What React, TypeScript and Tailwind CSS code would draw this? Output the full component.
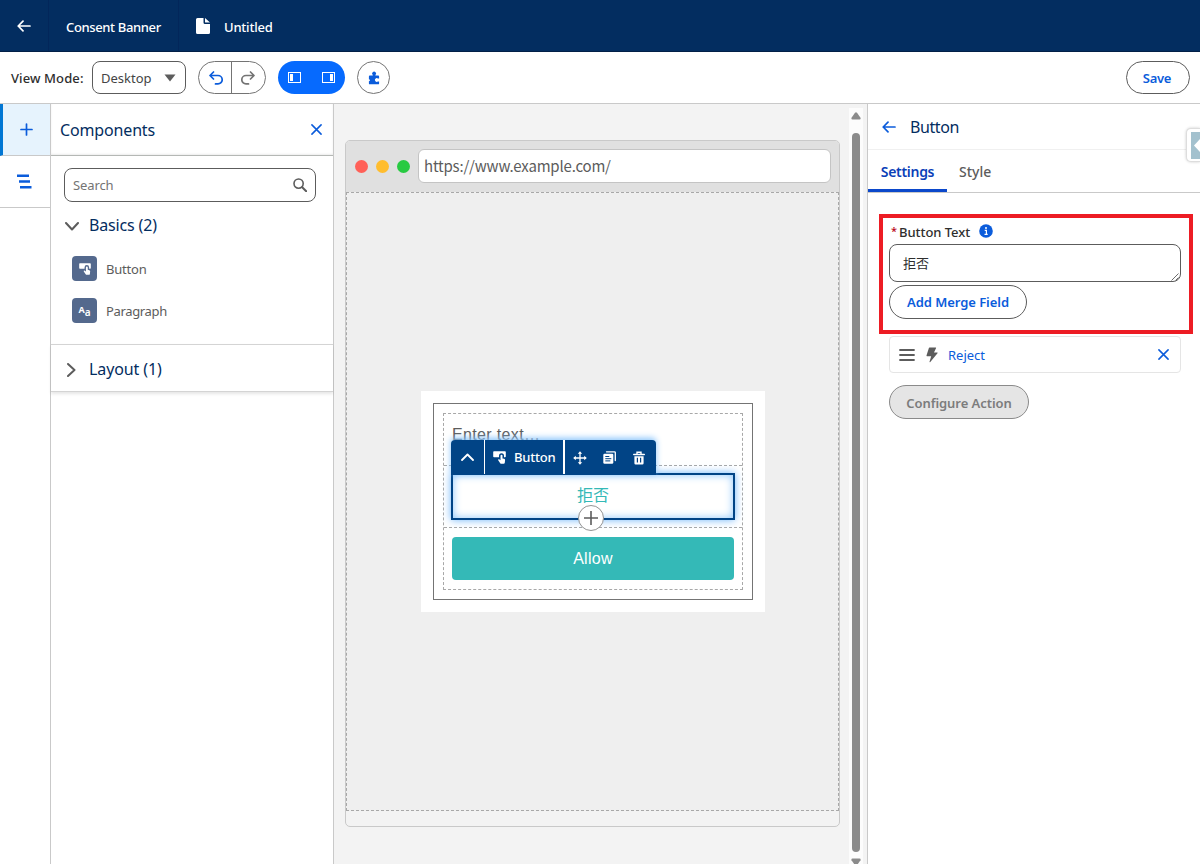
import type { ReactNode } from "react";

const ui = "font-['Noto_Sans','Noto_Sans_CJK_JP',sans-serif]";

function BackArrow({ className }: { className?: string }) {
  return (
    <svg viewBox="0 0 14 12" className={className} fill="none" stroke="currentColor" strokeWidth="1.7" strokeLinecap="round" strokeLinejoin="round">
      <path d="M13 6H1.2M6 1.2 1.2 6 6 10.8" />
    </svg>
  );
}

function CloseIcon({ className }: { className?: string }) {
  return (
    <svg viewBox="0 0 12 12" className={className} fill="none" stroke="currentColor" strokeWidth="1.7" strokeLinecap="round">
      <path d="m1 1 10 10M11 1 1 11" />
    </svg>
  );
}

function TouchIcon({ className }: { className?: string }) {
  return (
    <svg viewBox="0 0 13 13" className={className} fill="currentColor">
      <path d="M1 .2h11a.8.8 0 0 1 .8.8v4.400a.8.8 0 0 1-.8.8h-1V4.800a2.500 2.500 0 0 0-5 0v1.400H1a.8.8 0 0 1-.8-.8V1A.8.8 0 0 1 1 .2Z" />
      <path d="M7.500 4.800a1 1 0 0 1 2 0v2.600l1.700.4c.6.2.9.6.9 1.200l-.3 2.800c-.1.6-.5 1-1.100 1H8.300c-.5 0-.8-.2-1.100-.6L5.200 9.200c-.3-.6.4-1.200 1-.9l1.300.9Z" />
    </svg>
  );
}

function Section({ children, className }: { children: ReactNode; className: string }) {
  return <div className={`flex items-center text-[16px] text-[#032d60] ${className}`}>{children}</div>;
}

function TopBar() {
  return (
    <header className="flex h-[52px] shrink-0 items-center border-b border-[#021f47] bg-[#032d60] text-[13px] font-medium text-white">
      <div className="flex h-full w-[49px] items-center justify-center border-r border-[#02265a]">
        <BackArrow className="h-[12px] w-[14px]" />
      </div>
      <div className="flex h-full w-[130px] items-center border-r border-[#02265a] pl-[17px] pt-[4px]">
        <span className="whitespace-nowrap tracking-[-0.36px]">Consent Banner</span>
      </div>
      <svg viewBox="0 0 14 16" className="ml-[17px] mt-px h-[16px] w-[14px]" fill="currentColor">
        <path d="M1.500 0H7.500v4.500A1.500 1.500 0 0 0 9 6h5v8.500a1.500 1.500 0 0 1-1.500 1.500h-11A1.500 1.500 0 0 1 0 14.500v-13A1.500 1.500 0 0 1 1.500 0Z" />
        <path d="M9 0l5 4.600H9.500a.5.5 0 0 1-.5-.5Z" />
      </svg>
      <span className="ml-[14px] pt-[4px] tracking-[-0.2px]">Untitled</span>
    </header>
  );
}

function Toolbar() {
  return (
    <div className="flex h-[52px] shrink-0 items-center border-b border-[#c9c9c9] bg-white pl-[11px] pr-[10px] text-[13px]">
      <span className="w-[81px] whitespace-nowrap pt-[3px] font-medium tracking-[0.1px] text-[#2e2e2e]">View Mode:</span>
      <div className="flex h-[33px] w-[94px] items-center justify-between rounded-[8px] border border-[#5c5c5c] pl-[8px] pr-[9px] text-[#444]">
        <span className="pt-[2px]">Desktop</span>
        <svg viewBox="0 0 12 8" className="h-[8px] w-[12px]" fill="#5c5c5c">
          <path d="M.5.500h11L6 7.500Z" />
        </svg>
      </div>
      <div className="ml-[12px] flex h-[33px] w-[68px] rounded-full border border-[#747474]">
        <div className="flex w-[33px] items-center justify-center border-r border-[#747474] pl-[2px] text-[#0b5cdb]">
          <svg viewBox="0 0 14 14" className="h-[14px] w-[14px]" fill="none" stroke="currentColor" strokeWidth="1.7" strokeLinecap="round" strokeLinejoin="round">
            <path d="M4.500 1 1 4.500 4.500 8M1.300 4.500H9a4.200 4.200 0 1 1 0 8.400H6.500" />
          </svg>
        </div>
        <div className="flex flex-1 items-center justify-center pr-[2px] text-[#747474]">
          <svg viewBox="0 0 14 14" className="h-[14px] w-[14px]" fill="none" stroke="currentColor" strokeWidth="1.7" strokeLinecap="round" strokeLinejoin="round">
            <path d="M9.500 1 13 4.500 9.500 8M12.700 4.500H5a4.200 4.200 0 1 0 0 8.400h2.500" />
          </svg>
        </div>
      </div>
      <div className="ml-[12px] flex h-[33px] w-[67px] items-center justify-around rounded-full bg-[#066afe] text-white">
        <svg viewBox="0 0 13 11" className="h-[11px] w-[13px]">
          <rect x=".5" y=".5" width="12" height="10" fill="none" stroke="currentColor" />
          <rect x="2" y="2" width="3" height="7" fill="currentColor" />
        </svg>
        <svg viewBox="0 0 13 11" className="h-[11px] w-[13px]">
          <rect x=".5" y=".5" width="12" height="10" fill="none" stroke="currentColor" />
          <rect x="8" y="2" width="3" height="7" fill="currentColor" />
        </svg>
      </div>
      <div className="ml-[12px] flex h-[33px] w-[33px] items-center justify-center rounded-full border border-[#747474] text-[#0b5cdb]">
        <svg viewBox="0 0 12 14" className="h-[14px] w-[12px]" fill="currentColor" fillRule="evenodd">
          <path d="M1.800 4.500h2.700c.4 0 .5-.300.400-.600a1.900 1.900 0 1 1 2.400 0c-.1.300 0 .600.400.600h2.500c.6 0 .9.300.9.900v2.200H9.900a1.800 1.800 0 1 0 0 2.800h1.200v2c0 .6-.3.900-.9.900H1.800c-.6 0-.9-.3-.9-.9V10.300a1 1 0 0 0 0-2V5.400c0-.6.3-.9.900-.9Z" />
        </svg>
      </div>
      <button className="ml-auto h-[33px] w-[64px] rounded-full border border-[#5c5c5c] pr-[2px] pt-[2px] font-semibold tracking-[-0.3px] text-[#0b5cdb]">Save</button>
    </div>
  );
}

function Rail() {
  return (
    <nav className="w-[51px] shrink-0 border-r border-[#c9c9c9] text-[#0b5cdb]">
      <div className="flex h-[52px] items-center justify-center border-b border-l-[3px] border-b-[#c9c9c9] border-l-[#0176d3] bg-[#e6f3fd]">
        <svg viewBox="0 0 13 13" className="h-[13px] w-[13px]" stroke="currentColor" strokeWidth="1.700" strokeLinecap="round">
          <path d="M6.500 1v11M1 6.500h11" />
        </svg>
      </div>
      <div className="flex h-[52px] items-center justify-center border-b border-[#c9c9c9] pr-[2px]">
        <svg viewBox="0 0 15 15" className="h-[15px] w-[15px]" fill="currentColor">
          <path d="M0 .5h12v2.500H0zM2 6.300h11v2.500H2zM3 12h11.500v2.500H3z" />
        </svg>
      </div>
    </nav>
  );
}

function ComponentsPanel() {
  return (
    <aside className="flex w-[283px] shrink-0 flex-col border-r border-[#c9c9c9] bg-white">
      <div className="flex h-[52px] items-center justify-between border-b border-[#b5b8b5] pl-[9px] pr-[11px] shadow-[0_-1px_2px_rgba(0,0,0,0.08)_inset]">
        <h2 className="text-[16px] tracking-[-0.15px] text-[#032d60]">Components</h2>
        <CloseIcon className="h-[11px] w-[11px] text-[#0b5cdb]" />
      </div>
      <div className="mx-[13px] mr-[17px] mt-[12px] flex h-[34px] items-center justify-between rounded-[8px] border border-[#5c5c5c] pl-[8px] pr-[8px]">
        <span className="pt-[2px] text-[13px] tracking-[-0.1px] text-[#747474]">Search</span>
        <svg viewBox="0 0 14 14" className="h-[14px] w-[14px]" fill="none" stroke="#5c5c5c" strokeWidth="1.600" strokeLinecap="round">
          <circle cx="5.600" cy="5.600" r="4.600" />
          <path d="m9.200 9.200 4 4" strokeWidth="2" />
        </svg>
      </div>
      <Section className="mt-[11px] h-[24px] pl-[14px]">
        <svg viewBox="0 0 14 9" className="mr-[10px] mt-[3px] h-[9px] w-[14px]" fill="none" stroke="#5c5c5c" strokeWidth="2" strokeLinecap="round" strokeLinejoin="round">
          <path d="m1 1 6 6.500L13 1" />
        </svg>
        <span className="tracking-[-0.15px]">Basics (2)</span>
      </Section>
      <ul className="mt-[19px] flex flex-col gap-[17px] pl-[21px] text-[13px] text-[#5c5c5c]">
        <li className="flex h-[25px] items-center">
          <span className="mr-[9px] flex h-[25px] w-[25px] items-center justify-center rounded-[4px] bg-[#54698d] text-white">
            <TouchIcon className="h-[12px] w-[12px]" />
          </span>
          <span className="pt-[2px] tracking-[-0.2px]">Button</span>
        </li>
        <li className="flex h-[25px] items-center">
          <span className="mr-[9px] flex h-[25px] w-[25px] items-center justify-center rounded-[4px] bg-[#54698d] font-bold leading-none text-white">
            <span className="mb-[3px] text-[9px]">A</span>
            <span className="mt-[3px] text-[10px] font-semibold">a</span>
          </span>
          <span className="pt-[2px] tracking-[-0.35px]">Paragraph</span>
        </li>
      </ul>
      <Section className="mt-[21px] h-[48px] border-b border-t border-[#d4d4d4] pl-[16px] shadow-[0_2px_3px_rgba(0,0,0,0.1)]">
        <svg viewBox="0 0 9 14" className="mr-[13px] mt-[3px] h-[14px] w-[9px]" fill="none" stroke="#5c5c5c" strokeWidth="2" strokeLinecap="round" strokeLinejoin="round">
          <path d="m1 1 6.500 6L1 13" />
        </svg>
        <span className="pt-[2px] tracking-[-0.1px]">Layout (1)</span>
      </Section>
    </aside>
  );
}

function ActionBar() {
  return (
    <div className={`absolute -left-[2px] -top-[35px] flex h-[35px] w-[205px] items-center rounded-t-[4px] bg-[#014486] text-white shadow-[0_-2px_6px_#8ac5fb] ${ui}`}>
      <div className="flex h-[34px] w-[34px] items-center justify-center self-start border-r border-white">
        <svg viewBox="0 0 13 8" className="h-[8px] w-[13px]" fill="none" stroke="currentColor" strokeWidth="1.800" strokeLinecap="round" strokeLinejoin="round">
          <path d="m1 7 5.500-5.500L12 7" />
        </svg>
      </div>
      <div className="flex h-[34px] w-[80px] items-center self-start border-r-2 border-white pl-[8px] text-[13px] font-medium">
        <TouchIcon className="mr-[8px] h-[13px] w-[13px]" />
        <span className="pt-[2px] tracking-[-0.2px]">Button</span>
      </div>
      <svg viewBox="0 0 14 14" className="ml-[8px] h-[14px] w-[14px]" fill="none" stroke="currentColor" strokeWidth="1.300">
        <path d="M7 2v10M2 7h10" />
        <path d="m7 .2 2.200 2.600H4.800ZM7 13.800l2.200-2.600H4.800ZM.2 7l2.600-2.200v4.400ZM13.800 7l-2.600-2.200v4.400Z" fill="currentColor" stroke="none" />
      </svg>
      <svg viewBox="0 0 13 13" className="ml-[16px] h-[13px] w-[13px]">
        <path d="M3.500.800h8a.8.8 0 0 1 .8.8v8" fill="none" stroke="currentColor" strokeWidth="1.300" strokeLinecap="round" />
        <rect x=".3" y="2.700" width="10" height="10" rx="1.200" fill="currentColor" />
        <path d="M2.300 5.500h4M2.300 7.700h6M2.300 9.900h5" stroke="#014486" strokeWidth="1" />
      </svg>
      <svg viewBox="0 0 12 14" className="ml-[17px] h-[14px] w-[12px]" fill="none" stroke="currentColor">
        <path d="M.7 3.500h10.600M4 3V1.200h4V3" strokeWidth="1.400" strokeLinecap="round" />
        <path fill="currentColor" stroke="none" d="M1.400 5.200h9.200v7a1.200 1.200 0 0 1-1.200 1.200H2.600a1.200 1.200 0 0 1-1.200-1.200Z" />
        <path d="M4.400 6.800v4.800M7.600 6.800v4.800" stroke="#014486" strokeWidth="1.200" />
      </svg>
    </div>
  );
}

function ConsentCard() {
  return (
    <div className="ml-px h-[221px] w-[344px] bg-white p-[12px] font-['Liberation_Sans','Noto_Sans_CJK_JP',sans-serif]">
      <div className="h-full border border-[#747474] p-[9px]">
        <div className="flex h-full flex-col border border-dashed border-[#a8a8a8] text-[16px]">
          <div className="h-[52px] border-b border-dashed border-[#a8a8a8] pl-[8px] pt-[9px] tracking-[0.35px] text-[#5c5c5c]">Enter text…</div>
          <div className="h-[62px] border-b border-dashed border-[#a8a8a8] px-[7px] pt-[7px]">
            <div className="relative flex h-[47px] items-center justify-center border-2 border-[#014486] text-[#34b9b7] shadow-[0_0_8px_#6cb4fa,0_0_8px_#8ac5fb_inset]">
              <span className="pb-[2px]">拒否</span>
              <ActionBar />
              <div className="absolute left-[125px] top-[30px] flex h-[26px] w-[26px] items-center justify-center rounded-full border border-[#939393] bg-white">
                <svg viewBox="0 0 14 14" className="h-[14px] w-[14px]" stroke="#5c5c5c" strokeWidth="1.600">
                  <path d="M7 0v14M0 7h14" />
                </svg>
              </div>
            </div>
          </div>
          <div className="px-[8px] pt-[9px]">
            <div className="flex h-[43px] items-center justify-center rounded-[4px] bg-[#34b9b7] pt-px tracking-[0.3px] text-white">Allow</div>
          </div>
        </div>
      </div>
    </div>
  );
}

function Canvas() {
  return (
    <main className="flex min-w-0 flex-1 bg-[#f3f3f3]">
      <div className="ml-[11px] mt-[36px] flex h-[687px] w-[495px] flex-col rounded-[5px] border border-[#c9c9c9]">
        <div className="flex h-[51px] shrink-0 items-center rounded-t-[4px] bg-[#e0e0e0] pl-[9px]">
          <span className="h-[13px] w-[13px] rounded-full bg-[#ff6058]" />
          <span className="ml-[8px] h-[13px] w-[13px] rounded-full bg-[#ffbd2e]" />
          <span className="ml-[8px] h-[13px] w-[13px] rounded-full bg-[#28ca42]" />
          <div className="mb-px ml-[8px] flex h-[34px] w-[413px] items-center rounded-[6px] border border-[#c4c4c4] bg-white pl-[5px] pt-px font-['Noto_Sans_CJK_JP',sans-serif] text-[15px] tracking-[-0.2px] text-[#5c5c5c]">
            https://www.example.com/
          </div>
        </div>
        <div className="flex h-[619px] items-center justify-center border border-dashed border-[#a8a8a8] bg-[#efefef]">
          <ConsentCard />
        </div>
      </div>
      <div className="ml-auto mr-[4px] mt-[4px] flex w-[14px] flex-col items-center bg-[#fcfcfc] pt-[4px]">
        <svg viewBox="0 0 10 8" className="h-[8px] w-[10px] shrink-0" fill="#8b8b8b">
          <path d="M4 .8Q5-.3 6 .8l3.500 5Q10 7.500 8.500 7.500h-7Q0 7.500.5 5.800Z" />
        </svg>
        <div className="mt-[13px] h-[719px] w-[8px] shrink-0 rounded-full bg-[#8b8b8b]" />
        <svg viewBox="0 0 10 8" className="mt-[6px] h-[8px] w-[10px] shrink-0" fill="#8b8b8b">
          <path d="M4 7.200Q5 8.300 6 7.200l3.500-5Q10 .5 8.500.5h-7Q0 .5.500 2.200Z" />
        </svg>
      </div>
    </main>
  );
}

function SettingsPanel() {
  return (
    <aside className="relative flex w-[333px] shrink-0 flex-col border-l border-[#c9c9c9] bg-white">
      <div className="flex h-[46px] items-center border-b border-[#f0f0f0] pl-[14px] text-[16px] text-[#032d60]">
        <BackArrow className="mr-[14px] h-[12px] w-[14px] text-[#0b5cdb]" />
        <span className="tracking-[-0.4px]">Button</span>
      </div>
      <div className="flex h-[43px] border-b border-[#c9c9c9] text-[14px]">
        <div className="flex h-[42px] w-[79px] items-center justify-center border-b-[3px] border-[#0b48cb] pt-[4px] font-semibold tracking-[-0.3px] text-[#0b3fb8]">Settings</div>
        <div className="ml-[12px] flex h-[39px] items-center pt-[4px] font-medium text-[#5c5c5c]">Style</div>
      </div>
      <div className="ml-[11px] mt-[21px] h-[120px] w-[314px] border-4 border-[#ed1c24] px-[6px] pt-[3px] text-[13px]">
        <div className="flex h-[20px] items-center pl-[2px] font-medium text-[#2e2e2e]">
          <span className="mr-[2px] pt-px text-[11px] text-[#ba0517]">*</span>
          <span className="pt-[3px] tracking-[-0.05px]">Button Text</span>
          <svg viewBox="0 0 14 14" className="ml-[9px] h-[14px] w-[14px]">
            <circle cx="7" cy="7" r="6.800" fill="#0b5cdb" />
            <circle cx="7" cy="4" r="1" fill="white" />
            <path d="M5.700 6.400h1.700v3.800M5.500 10.400h3.200" stroke="white" strokeWidth="1.200" fill="none" />
          </svg>
        </div>
        <div className="mt-[3px] flex h-[38px] w-[292px] items-center rounded-[8px] border border-[#5c5c5c] pl-[13px] text-[#2e2e2e]">
          <span className="pt-px">拒否</span>
          <svg viewBox="0 0 8 8" className="ml-auto mr-px mt-auto h-[8px] w-[8px]" stroke="#5c5c5c" strokeWidth=".9">
            <path d="M.5 7.500l7-7M4.500 7.500l3-3" />
          </svg>
        </div>
        <button className="mt-[3px] h-[34px] w-[138px] rounded-full border border-[#5c5c5c] pt-[2px] font-semibold tracking-[-0.05px] text-[#0b5cdb]">Add Merge Field</button>
      </div>
      <div className="ml-[21px] mt-[2px] flex h-[37px] w-[292px] items-center rounded-[4px] border border-[#e5e5e5] pl-[9px] pr-[11px] text-[13px] text-[#0b5cdb]">
        <svg viewBox="0 0 16 12" className="h-[12px] w-[16px]" stroke="#5c5c5c" strokeWidth="1.800" strokeLinecap="round">
          <path d="M1 1h14M1 6h14M1 11h14" />
        </svg>
        <svg viewBox="0 0 12 16" className="ml-[11px] h-[16px] w-[12px]" fill="#5c5c5c">
          <path d="M3.500.5h6.200c.4 0 .5.300.4.600L8 5.500h3.100c.5 0 .7.500.4.800L4.300 15c-.4.400-.9.200-.8-.3L5.200 9.200H1c-.4 0-.6-.3-.5-.7L2.900 1c.1-.3.300-.5.600-.5Z" />
        </svg>
        <span className="ml-[10px] pt-[2px]">Reject</span>
        <CloseIcon className="ml-auto h-[11px] w-[11px]" />
      </div>
      <button className="ml-[21px] mt-[12px] h-[34px] w-[140px] rounded-full border border-[#8a8a8a] bg-[#e5e5e5] pt-[3px] text-[13px] font-semibold tracking-[-0.05px] text-[#7c7c7c]">
        Configure Action
      </button>
      {/* collapsed drawer handle, clipped by the window edge */}
      <div className="absolute right-0 top-[24px] flex h-[34px] w-[14px] items-center rounded-l-[5px] border border-r-0 border-[#ddd] bg-white pl-[4px] shadow-[0_0_3px_rgba(0,0,0,0.2)]">
        <div className="flex h-[27px] w-full items-center bg-[#a3c1ce] pl-[3px]">
          <svg viewBox="0 0 6 13" className="h-[13px] w-[6px]" fill="white">
            <path d="M6 0v13L0 6.500Z" />
          </svg>
        </div>
      </div>
    </aside>
  );
}

export default function App() {
  return (
    <div className={`flex h-[864px] w-[1200px] flex-col overflow-hidden bg-white ${ui}`}>
      <TopBar />
      <Toolbar />
      <div className="flex min-h-0 flex-1">
        <Rail />
        <ComponentsPanel />
        <Canvas />
        <SettingsPanel />
      </div>
    </div>
  );
}
